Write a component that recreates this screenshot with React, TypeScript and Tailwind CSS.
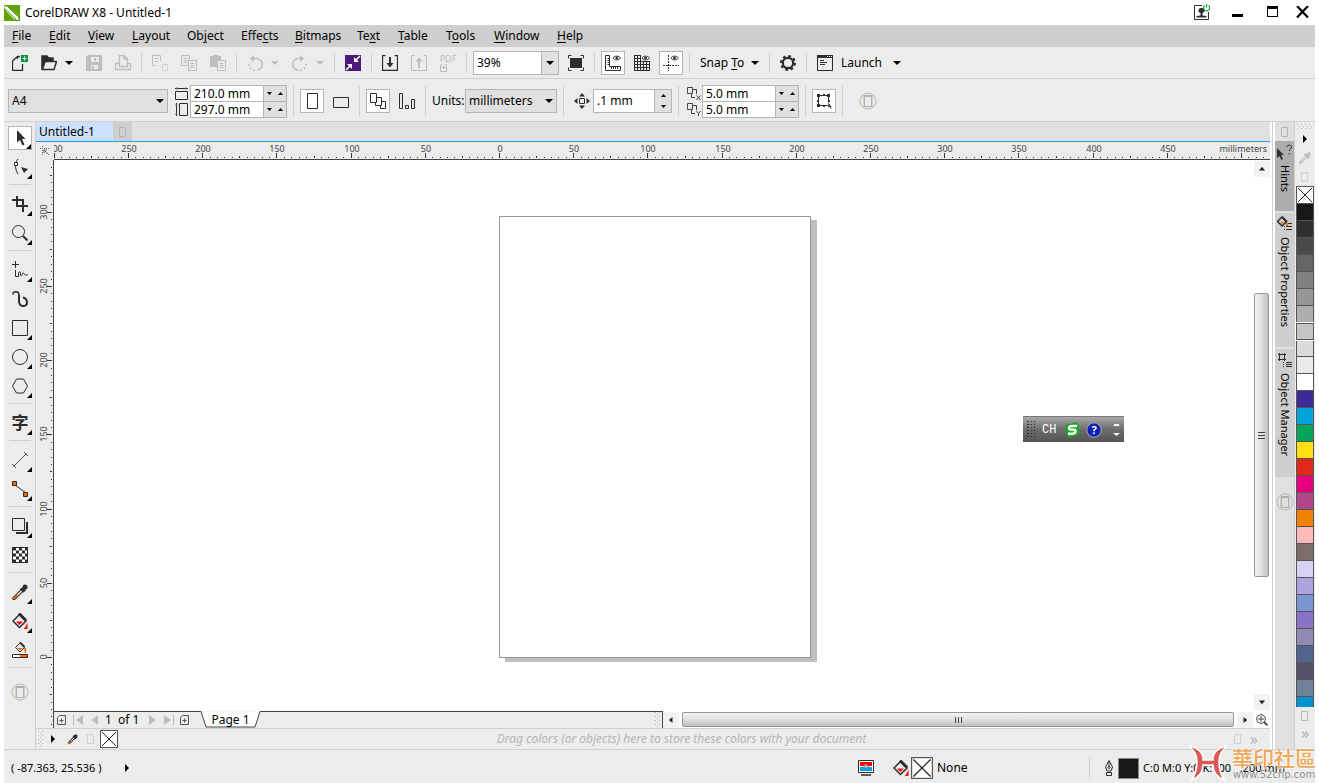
import type { ReactNode } from "react";
import clsx from "clsx";

const INK = "#2d2d2d";
const DIM = "#bdbdbd";

/* ---------- small shared parts ---------- */

function Icon({ children, size = 16, className }: { children: ReactNode; size?: number; className?: string }) {
  return (
    <svg width={size} height={size} viewBox={`0 0 ${size} ${size}`} fill="none" stroke={INK} className={clsx("shrink-0", className)} aria-hidden="true">
      {children}
    </svg>
  );
}

function Caret({ dir = "down", color = "#000" }: { dir?: "down" | "up" | "left" | "right"; color?: string }) {
  const paths = { down: "M0 2h8L4 6z", up: "M0 6h8L4 2z", left: "M6 0v8L2 4z", right: "M2 0v8l4-4z" };
  return (
    <svg width="8" height="8" viewBox="0 0 8 8" fill={color} className="shrink-0" aria-hidden="true">
      <path d={paths[dir]} />
    </svg>
  );
}

function SmallCaret({ up }: { up?: boolean }) {
  return (
    <svg width="5" height="3" viewBox="0 0 5 3" fill="#000" aria-hidden="true">
      <path d={up ? "M0 3h5L2.500 0z" : "M0 0h5L2.500 3z"} />
    </svg>
  );
}

function Separator() {
  return (
    <span className="flex w-[3px] shrink-0 justify-center self-stretch py-[5px]">
      <span className="w-px bg-[#cfcfcf]" />
    </span>
  );
}

function ToolButton({ label, active, children }: { label: string; active?: boolean; children: ReactNode }) {
  return (
    <button
      type="button"
      aria-label={label}
      title={label}
      className={clsx("flex size-6 shrink-0 items-center justify-center", active && "border border-[#b5b5b5] bg-white")}
    >
      {children}
    </button>
  );
}

function CaretButton({ label, dim }: { label: string; dim?: boolean }) {
  return (
    <button type="button" aria-label={label} className="-ml-[5px] flex h-6 w-4 shrink-0 items-center justify-center">
      <Caret color={dim ? DIM : "#000"} />
    </button>
  );
}

function PlusCircle() {
  return (
    <Icon size={18}>
      <circle cx="9" cy="9" r="8" stroke="#b8b8b8" />
      <path d="M5.500 4h7v10.500h-7z" stroke="#b0b0b0" />
      <path d="M5 4h8" stroke="#b0b0b0" strokeWidth="2" />
      <path d="M4.500 3v12" stroke="#dccfc0" />
      <path d="M13.500 3v12" stroke="#c3d0dc" />
    </Icon>
  );
}

function EmptyBox({ dim }: { dim?: boolean }) {
  return (
    <svg width="8" height="10" viewBox="0 0 8 10" fill="none" aria-hidden="true">
      <path d="M.5.5h6v9h-6z" stroke={dim ? "#cfcfcf" : "#b4b4b4"} />
    </svg>
  );
}

function NoneSwatch({ size = 17 }: { size?: number }) {
  return (
    <svg width={size} height={size} viewBox="0 0 18 18" className="shrink-0" aria-hidden="true">
      <rect x=".5" y=".5" width="17" height="17" fill="#fff" stroke="#555" />
      <path d="M2 2l14 14M16 2L2 16" stroke="#222" />
    </svg>
  );
}

function Eyedropper({ dim }: { dim?: boolean }) {
  const c = dim ? DIM : INK;
  return (
    <Icon>
      <path d="M2 14.500L10 6.500" stroke={c} strokeWidth="3.500" strokeLinecap="round" />
      <path d="M5 11.500L10 6.500" stroke="#ececec" strokeWidth="1.500" />
      {!dim && <path d="M1.500 15l4-4" stroke="#e06a1c" strokeWidth="2" />}
      <path d="M8.500 4.500l3.500 3.500" stroke={c} strokeWidth="2" />
      <circle cx="13" cy="3" r="2.500" fill={c} stroke="none" />
      <path d="M10 4l3 3" stroke={c} strokeWidth="3" />
    </Icon>
  );
}

function PaintBucket() {
  return (
    <Icon>
      <path d="M7.500 1.500L14 8l-6.500 6.500L1 8z" fill="#ececec" strokeWidth="1.500" />
      <path d="M7 .5l7 7" strokeWidth="3" />
      <path d="M4 8.500h7L7.500 12z" fill="#f00" stroke="none" />
      <path d="M15.500 9v7h-4c2-1.500 3-4 4-7z" fill="#f00" stroke="none" />
    </Icon>
  );
}

function Grip({ className }: { className?: string }) {
  return (
    <svg width="6" height="16" viewBox="0 0 6 16" fill="#b4b4b4" className={clsx("shrink-0", className)} aria-hidden="true">
      {[0, 4, 8, 12].map((y) => (
        <g key={y}>
          <path d={`M0 ${y}h1v1h-1zM4 ${y}h1v1h-1zM2 ${y + 2}h1v1h-1z`} />
        </g>
      ))}
    </svg>
  );
}

/* ---------- title and menus ---------- */

function TitleBar() {
  return (
    <header className="flex h-[25px] shrink-0 items-center">
      <svg width="16" height="16" viewBox="0 0 16 16" aria-hidden="true">
        <path d="M0 0h16v16H0z" fill="#5fa304" />
        <path d="M0 1l4 1 9 8 2 5-5-1-8-8z" fill="#fff" />
        <path d="M1 4l11 10M4 2l9 9" stroke="#5fa304" />
      </svg>
      <h1 className="ml-[5px] grow text-xs">CorelDRAW X8 - Untitled-1</h1>
      <div className="flex items-center pr-[6px] pb-[2px]">
        <button type="button" aria-label="Account" className="mr-[22px]">
          <Icon>
            <path d="M8 1.500H.5v14h14V8" />
            <path d="M7.500 4a2.500 2.500 0 0 1 1 5v2.500l4 .5v1.500H2.500V12l4-.5V9a2.500 2.500 0 0 1 1-5z" fill={INK} stroke="none" />
            <path d="M10.800 1.500a3 3 0 1 0 3.700 0M12.600 0v3.500" stroke="#19a34a" strokeWidth="1.200" />
          </Icon>
        </button>
        <button type="button" aria-label="Minimize" className="mr-6 flex h-4 w-[11px] items-end pb-[3px]">
          <span className="h-[3px] w-full bg-black" />
        </button>
        <button type="button" aria-label="Maximize" className="mr-[18px] h-[11px] w-[11px] border border-t-[3px] border-black" />
        <button type="button" aria-label="Close">
          <svg width="13" height="12" viewBox="0 0 13 12" aria-hidden="true">
            <path d="M1 0l11 11.500M12 0L1 11.500" stroke="#000" strokeWidth="2.200" />
          </svg>
        </button>
      </div>
    </header>
  );
}

// [before, hot key, after, width of the entry]
const menus: [string, string, string, string][] = [
  ["", "F", "ile", "w-[37px]"],
  ["", "E", "dit", "w-[39px]"],
  ["", "V", "iew", "w-[44px]"],
  ["", "L", "ayout", "w-[55px]"],
  ["Ob", "j", "ect", "w-[54px]"],
  ["Effe", "c", "ts", "w-[54px]"],
  ["", "B", "itmaps", "w-[62px]"],
  ["Te", "x", "t", "w-[41px]"],
  ["", "T", "able", "w-[48px]"],
  ["T", "o", "ols", "w-[48px]"],
  ["", "W", "indow", "w-[63px]"],
  ["", "H", "elp", "w-[44px]"],
];

function MenuBar() {
  return (
    <nav className="flex h-[22px] shrink-0 items-center bg-[#cfcfcf] pl-2">
      {menus.map(([before, key, after, width]) => (
        <button key={before + key + after} type="button" className={clsx("shrink-0 text-left text-xs whitespace-nowrap", width)}>
          {before}
          <u className="underline-offset-2">{key}</u>
          {after}
        </button>
      ))}
    </nav>
  );
}

/* ---------- standard toolbar ---------- */

function StandardBar() {
  return (
    <div className="flex h-8 shrink-0 items-center gap-[5px] border-b border-[#cfcfcf] pt-px pl-1">
      <ToolButton label="New">
        <Icon>
          <path d="M8 1.500H5.500L.5 6v9.500h10V9M5.500 1.500V4" strokeWidth="1.300" />
          <path d="M9 0h7v7H9z" fill="#0b9437" stroke="none" />
          <path d="M12.500 1.500v4M10.500 3.500h4" stroke="#fff" />
        </Icon>
      </ToolButton>
      <ToolButton label="Open">
        <Icon>
          <path d="M1 15V1h5l1.500 2H12v3" fill={INK} strokeWidth="1.500" />
          <path d="M1.500 14.500L4 6.500h11.500l-2.500 8z" fill="#ececec" strokeWidth="1.500" />
        </Icon>
      </ToolButton>
      <CaretButton label="Open recent" />
      <ToolButton label="Save">
        <Icon>
          <path d="M2 0h14v16H0V2z" fill={DIM} stroke="none" />
          <path d="M5 2h8v5H5zM5 10h7v4H5z" fill="#ececec" stroke="none" />
          <path d="M9 3v3M7 11v3" stroke={DIM} strokeWidth="2" />
        </Icon>
      </ToolButton>
      <ToolButton label="Print">
        <Icon>
          <path d="M4.500 11.500V.5H9l3.500 3.500v7.500zM9 .5V4h3.500M4 8.500H.5v6h15v-6H13" stroke={DIM} strokeWidth="1.300" />
        </Icon>
      </ToolButton>
      <Separator />
      <ToolButton label="Cut">
        <Icon>
          <path d="M4 10.500H.5V.5h8V6M3 3.500h3M3 6.500h3" stroke={DIM} />
          <path d="M10.500 9.500h5v6h-5z" stroke={DIM} strokeDasharray="1 1" />
        </Icon>
      </ToolButton>
      <ToolButton label="Copy">
        <Icon>
          <path d="M7 10.500H.5V.5h8V5M2.500 3.500h4M2.500 5.500h4M2.500 7.500h4" stroke={DIM} />
          <path d="M7.500 5.500h8v10h-8zM9.500 8.500h4M9.500 10.500h4M9.500 12.500h4" stroke={DIM} />
        </Icon>
      </ToolButton>
      <ToolButton label="Paste">
        <Icon>
          <path d="M0 1h3V0h5v1h3v4H7v7H0z" fill={DIM} stroke="none" />
          <path d="M7.500 5.500h8v10h-8zM9.500 8.500h4M9.500 10.500h4M9.500 12.500h4" stroke={DIM} fill="#ececec" />
        </Icon>
      </ToolButton>
      <Separator />
      <ToolButton label="Undo">
        <Icon>
          <path d="M6 3.500h3a5.700 5.700 0 0 1 1 11.500" stroke={DIM} strokeWidth="1.500" />
          <path d="M8 15.500C4 15 2 12 1.500 8.500" stroke={DIM} strokeWidth="1.500" strokeDasharray="2 2" />
          <path d="M7 0v7L3 3.500z" fill={DIM} stroke="none" />
        </Icon>
      </ToolButton>
      <CaretButton label="Undo list" dim />
      <ToolButton label="Redo">
        <Icon>
          <path d="M10 3.500H7A5.700 5.700 0 0 0 6 15" stroke={DIM} strokeWidth="1.500" />
          <path d="M8 15.500c4-.5 6-3.500 6.500-7" stroke={DIM} strokeWidth="1.500" strokeDasharray="2 2" />
          <path d="M8 0v7l4-3.500z" fill={DIM} stroke="none" />
        </Icon>
      </ToolButton>
      <CaretButton label="Redo list" dim />
      <Separator />
      <ToolButton label="Search content">
        <Icon>
          <path d="M0 0h16v16H0z" fill="#4d1979" stroke="none" />
          <path d="M15 1l-5 5M1 15l5-5" stroke="#fff" strokeWidth="1.500" />
          <path d="M9 2v5h5zM2 9h5v5z" fill="#fff" stroke="none" />
        </Icon>
      </ToolButton>
      <Separator />
      <ToolButton label="Import">
        <Icon>
          <path d="M3.500.5h-3v15h15V.5h-3" strokeWidth="1.300" />
          <path d="M8 2v8" strokeWidth="2" />
          <path d="M4.500 8h7L8 12.500z" fill={INK} stroke="none" />
        </Icon>
      </ToolButton>
      <ToolButton label="Export">
        <Icon>
          <path d="M3.500.5h-3v15h15V.5h-3" stroke={DIM} />
          <path d="M8 5v8" stroke={DIM} strokeWidth="2" />
          <path d="M4.500 6.500h7L8 2z" fill={DIM} stroke="none" />
        </Icon>
      </ToolButton>
      <ToolButton label="Publish to PDF">
        <span className="flex flex-col items-start gap-px text-[#bdbdbd]">
          <span className="text-[9px] leading-[8px]">PDF</span>
          <svg width="8" height="8" viewBox="0 0 8 8" fill="none" stroke={DIM} aria-hidden="true">
            <path d="M2 .5H.5v7h6V.5H5M3.500 1v4M1.500 3.500h4" />
          </svg>
        </span>
      </ToolButton>
      <Separator />
      <div className="flex h-6 w-[86px] shrink-0 border border-[#b5b5b5] bg-white">
        <input aria-label="Zoom level" defaultValue="39%" className="w-[67px] px-[3px] text-xs outline-none" />
        <button type="button" aria-label="Zoom levels" className="flex grow items-center justify-center border-l border-[#b5b5b5] bg-[#e0e0e0]">
          <Caret />
        </button>
      </div>
      <ToolButton label="Full-screen preview">
        <Icon>
          <path d="M2 3h12v10H2z" fill={INK} stroke="none" />
          <path d="M3.500.5h-3v3M12.500.5h3v3M3.500 15.500h-3v-3M12.500 15.500h3v-3" />
        </Icon>
      </ToolButton>
      <Separator />
      <ToolButton label="Show rulers" active>
        <Icon>
          <path d="M.5.5h4v11h11v4H.5zM2.500 3.500h2M2.500 5.500h2M2.500 7.500h2M2.500 9.500h2M6.500 14v-2M8.500 14v-2M10.500 14v-2M12.500 14v-2" />
          <path d="M8 3C9.500.5 14 .5 15.500 3c-1.500 2.500-6 2.500-7.500 0z" />
          <circle cx="11.800" cy="3" r="1" fill={INK} />
        </Icon>
      </ToolButton>
      <ToolButton label="Show grid">
        <Icon>
          <path d="M.5.500v15M3.500.500v15M6.500.500v15M9.500 6v10M12.500 6v10M15.500 6v10M0 .5h7M0 3.500h7M0 6.500h16M0 9.500h16M0 12.500h16M0 15.500h16" />
          <path d="M8 3C9.500.5 13.500.5 15.500 3c-2 2.500-6 2.500-7.500 0z" />
          <circle cx="11.500" cy="3" r="1" fill={INK} />
        </Icon>
      </ToolButton>
      <ToolButton label="Show guidelines" active>
        <Icon>
          <path d="M5.500 0v16" strokeDasharray="2 1" />
          <path d="M0 10.500h16" strokeDasharray="2 1" />
          <path d="M8 3C9.500.5 13.500.5 15.500 3c-2 2.500-6 2.500-7.500 0z" />
          <circle cx="11.500" cy="3" r="1" fill={INK} />
        </Icon>
      </ToolButton>
      <Separator />
      <button type="button" className="flex h-6 w-[67px] shrink-0 items-center justify-between pr-1 pl-1 text-xs whitespace-nowrap">
        <span>
          Snap <u className="underline-offset-2">T</u>o
        </span>
        <Caret />
      </button>
      <Separator />
      <ToolButton label="Options">
        <Icon>
          <circle cx="8" cy="8" r="5.200" strokeWidth="2.200" />
          <circle cx="8" cy="8" r="7" strokeWidth="2" strokeDasharray="2.750 2.750" />
        </Icon>
      </ToolButton>
      <Separator />
      <button type="button" className="flex h-6 w-[88px] shrink-0 items-center pl-1 text-xs">
        <Icon>
          <path d="M.5.5h15v15H.5zM3 5.500h4M3 7.500h7M3 9.500h5" />
          <path d="M0 1.500h16" strokeWidth="3" />
          <path d="M10 1.500h5" stroke="#fff" strokeDasharray="1 1" />
        </Icon>
        <span className="ml-2 grow text-left">Launch</span>
        <Caret />
      </button>
    </div>
  );
}

/* ---------- property bar ---------- */

function StackedFields({ rows }: { rows: { label: string; value: string; icon: ReactNode }[] }) {
  return (
    <div className="flex shrink-0 flex-col">
      {rows.map((row, i) => (
        <label key={row.label} className="flex items-center">
          <span className="flex w-[17px] items-center justify-center">{row.icon}</span>
          <span className={clsx("flex h-[17px] w-[97px] border border-[#b5b5b5] bg-white", i > 0 && "-mt-px")}>
            <input aria-label={row.label} defaultValue={row.value} className="w-[72px] pl-[3px] text-xs leading-[15px] outline-none" />
            <span className="flex grow items-center justify-around border-l border-[#b5b5b5] bg-[#e0e0e0]">
              <SmallCaret />
              <SmallCaret up />
            </span>
          </span>
        </label>
      ))}
    </div>
  );
}

function Select({ label, id, options, width }: { label?: string; id: string; options: string[]; width: string }) {
  return (
    <span className={clsx("grid h-6 shrink-0 items-center border border-[#b5b5b5] bg-[#e0e0e0]", width)}>
      <select id={id} aria-label={label} className="col-start-1 row-start-1 h-full w-full appearance-none pl-[3px] text-xs outline-none">
        {options.map((o) => (
          <option key={o}>{o}</option>
        ))}
      </select>
      <span className="pointer-events-none col-start-1 row-start-1 mr-[3px] justify-self-end">
        <Caret />
      </span>
    </span>
  );
}

function DuplicateIcon({ axis }: { axis: "X" | "Y" }) {
  return (
    <svg width="14" height="13" viewBox="0 0 14 13" fill="none" stroke="#444" aria-hidden="true">
      <path d="M.5.5h5v6h-5zM6 2.500h3.500V7M4.500 7v3.500H8" />
      <path d={axis === "X" ? "M9.500 8.500l4 4.500M13.500 8.500l-4 4.500" : "M9.500 8l2 2.500 2-2.500M11.500 10.500V13"} />
    </svg>
  );
}

function PropertyBar() {
  return (
    <div className="flex h-[43px] shrink-0 items-center gap-[5px] border-b border-[#cfcfcf] pt-[2px] pl-1">
      <Select id="page-size" label="Page size" options={["A4", "A3", "Letter"]} width="w-[160px]" />
      <StackedFields
        rows={[
          {
            label: "Page width",
            value: "210.0 mm",
            icon: (
              <svg width="13" height="13" viewBox="0 0 13 13" fill="none" stroke={INK} aria-hidden="true">
                <path d="M0 1.500h13M.5 4.500h12v8H.5z" />
                <path d="M2 0v3M11 0v3" stroke="#888" />
              </svg>
            ),
          },
          {
            label: "Page height",
            value: "297.0 mm",
            icon: (
              <svg width="13" height="13" viewBox="0 0 13 13" fill="none" stroke={INK} aria-hidden="true">
                <path d="M1.500 0v13M4.500.5h8v12h-8z" />
                <path d="M0 2h3M0 11h3" stroke="#888" />
              </svg>
            ),
          },
        ]}
      />
      <Separator />
      <ToolButton label="Portrait" active>
        <Icon>
          <path d="M3.500.5h10v15h-10z" />
        </Icon>
      </ToolButton>
      <ToolButton label="Landscape">
        <Icon>
          <path d="M.5 4.500h15v10H.5z" />
        </Icon>
      </ToolButton>
      <Separator />
      <ToolButton label="All pages" active>
        <Icon>
          <path d="M10.500 8.500h5v7h-5z" fill="#fff" />
          <path d="M5.500 4.500h6v8h-6z" fill="#fff" />
          <path d="M.5.5h6v9h-6z" fill="#fff" />
        </Icon>
      </ToolButton>
      <ToolButton label="Current page">
        <Icon>
          <path d="M.5.5h3v15h-3zM6.500 12.500h3v3h-3zM12.500 6.500h3v9h-3z" />
        </Icon>
      </ToolButton>
      <Separator />
      <div className="flex w-[125px] shrink-0 items-center justify-between">
        <label htmlFor="units" className="text-xs">
          Units:
        </label>
        <Select id="units" options={["millimeters", "inches", "pixels"]} width="w-[92px]" />
      </div>
      <Separator />
      <label className="flex shrink-0 items-center">
        <span className="flex w-[23px] justify-center">
          <Icon>
            <path d="M5.500 5.500h5v5h-5z" />
            <path d="M8 0l3 3.500H5zM8 16l3-3.500H5zM0 8l3.500-3v6zM16 8l-3.500-3v6z" fill={INK} stroke="none" />
          </Icon>
        </span>
        <span className="flex h-6 w-[79px] border border-[#b5b5b5] bg-white">
          <input aria-label="Nudge distance" defaultValue=".1 mm" className="w-[60px] pl-[3px] text-xs outline-none" />
          <span className="flex grow flex-col items-center justify-around border-l border-[#b5b5b5] bg-[#e0e0e0]">
            <SmallCaret up />
            <SmallCaret />
          </span>
        </span>
      </label>
      <Separator />
      <StackedFields
        rows={[
          { label: "Duplicate distance X", value: "5.0 mm", icon: <DuplicateIcon axis="X" /> },
          { label: "Duplicate distance Y", value: "5.0 mm", icon: <DuplicateIcon axis="Y" /> },
        ]}
      />
      <Separator />
      <ToolButton label="Treat as filled" active>
        <Icon>
          <path d="M2.500 2.500h10v10h-10z" />
          <path d="M1 1h3v3H1zM11 1h3v3h-3zM1 11h3v3H1zM7 1h2v2H7zM7 12h2v2H7zM1 7h2v2H1zM12 7h2v2h-2z" fill={INK} stroke="none" />
          <path d="M12 9v6l1.500-1 1 2h1.500l-1-2h1z" fill={INK} stroke="#fff" strokeWidth=".5" />
        </Icon>
      </ToolButton>
      <Separator />
      <button type="button" aria-label="Customize property bar" className="ml-[10px]">
        <PlusCircle />
      </button>
    </div>
  );
}

/* ---------- toolbox ---------- */

type Tool = { name: string; flyout?: boolean; active?: boolean; icon: ReactNode };

const toolGroups: Tool[][] = [
  [
    { name: "Pick", flyout: true, active: true, icon: <path d="M5 0v12.500l3-2.500 2.500 5.500 2-1-2.500-5.500h3.500z" fill={INK} stroke="none" /> },
    {
      name: "Shape",
      flyout: true,
      icon: (
        <>
          <path d="M6 0C3 3 2.500 10 6 15" />
          <path d="M2.500 3.500h3v3h-3z" fill="#fff" />
          <path d="M9 8l7 2-4 4z" fill={INK} stroke="none" />
        </>
      ),
    },
  ],
  [
    {
      name: "Crop",
      flyout: true,
      icon: <path d="M5 0v10h11M0 4h11v12" strokeWidth="2" />,
    },
    {
      name: "Zoom",
      flyout: true,
      icon: (
        <>
          <circle cx="6.500" cy="6.500" r="6" />
          <path d="M11 11l4.500 4.500" strokeWidth="2" />
        </>
      ),
    },
  ],
  [
    {
      name: "Freehand",
      flyout: true,
      icon: <path d="M3.500-1v7M0 2.500h7M3.500 8v6.500h3v-4c1-1 2-1 2 1v2c1 1 1.500 0 2-2s2 1 2.500 1.500 1.500 0 3-.5" />,
    },
    {
      name: "Artistic media",
      icon: (
        <>
          <path d="M.7 3.500C1.500-.5 7 0 7 4v6" strokeWidth="1.500" />
          <path d="M7 4v6c0 6.500 8 6.500 8 1.500 0-2.500-1.500-4.500-4-5" strokeWidth="2" />
        </>
      ),
    },
    { name: "Rectangle", flyout: true, icon: <path d="M.5.5h15v15H.5z" /> },
    { name: "Ellipse", flyout: true, icon: <circle cx="8" cy="8" r="7.500" /> },
    { name: "Polygon", flyout: true, icon: <path d="M4.500 1h7L15.500 8l-4 7h-7L.5 8z" /> },
  ],
  [
    {
      name: "Text",
      flyout: true,
      icon: (
        <text x="8" y="14" textAnchor="middle" fill={INK} stroke="none" fontSize="17" fontWeight="700" fontFamily='"Noto Sans CJK SC", sans-serif'>
          字
        </text>
      ),
    },
  ],
  [
    {
      name: "Parallel dimension",
      flyout: true,
      icon: <path d="M1.500 14.500l13-13M0 12l4 4M12 0l4 4" stroke="#555" />,
    },
    {
      name: "Straight-line connector",
      flyout: true,
      icon: (
        <>
          <path d="M3 4l11 8" />
          <path d="M.5.5h4v4h-4zM11.500 11.500h4v4h-4z" fill="#ff6a00" />
        </>
      ),
    },
  ],
  [
    {
      name: "Drop shadow",
      flyout: true,
      icon: (
        <>
          <path d="M15 4v11H4" strokeWidth="2" />
          <path d="M.5.5h12v12H.5z" />
        </>
      ),
    },
    {
      name: "Transparency",
      icon: (
        <>
          <path d="M.5.5h15v15H.5z" fill="#fff" />
          {[0, 1, 2, 3, 4].map((r) => (
            <path key={r} d={`M${r % 2 ? 4 : 1} ${2 + r * 3}H15`} strokeWidth="3" strokeDasharray="3 3" />
          ))}
          <path d="M.5.5h15v15H.5z" />
        </>
      ),
    },
  ],
  [
    { name: "Color eyedropper", flyout: true, icon: <Eyedropper /> },
    { name: "Interactive fill", flyout: true, icon: <PaintBucket /> },
    {
      name: "Smart fill",
      icon: (
        <>
          <path d="M8 1l4.500 4.500L8 10 3.500 5.500z" />
          <path d="M8 .5l4.500 4.500" strokeWidth="2" />
          <path d="M5.500 6h5L8 8.500zM12 6h2v5h-1z" fill="#f60" stroke="none" />
          <path d="M.5 12.500h15v3H.5z" fill="#fff" />
          <path d="M8 13h7v2H8z" fill="#f60" stroke="none" />
        </>
      ),
    },
  ],
];

function Toolbox() {
  return (
    <aside className="flex w-8 shrink-0 flex-col items-center gap-[5px] border-r border-[#cfcfcf] pt-1">
      {toolGroups.map((group) => (
        <div key={group[0].name} className="flex flex-col items-center gap-[5px]">
          {group.map((tool) => (
            <button
              key={tool.name}
              type="button"
              aria-label={tool.name}
              title={tool.name}
              className={clsx("relative flex size-6 items-center justify-center", tool.active && "border border-[#b5b5b5] bg-white")}
            >
              <Icon className="overflow-visible">{tool.icon}</Icon>
              {tool.flyout && (
                <svg width="5" height="5" viewBox="0 0 5 5" className="absolute right-0 bottom-0" aria-hidden="true">
                  <path d="M5 0v5H0z" />
                </svg>
              )}
            </button>
          ))}
          <span className="mb-[2px] h-px w-[22px] bg-[#cfcfcf]" />
        </div>
      ))}
      <button type="button" aria-label="Customize toolbox" className="mt-2">
        <PlusCircle />
      </button>
    </aside>
  );
}

/* ---------- rulers ---------- */

const PX_PER_5MM = 7.42;

// step is counted in units of 5 mm from the page origin
function ticks(from: number, to: number) {
  return Array.from({ length: to - from + 1 }, (_, i) => {
    const step = from + i;
    return { step, offset: Math.round(step * PX_PER_5MM), size: step % 10 === 0 ? 5 : step % 5 === 0 ? 2 : 1 };
  });
}

function HorizontalRuler() {
  return (
    <div className="flex h-[18px] min-w-0 grow border-b border-[#444]">
      <svg className="h-[17px] min-w-0 grow text-[9px]" fill="#444" aria-hidden="true">
        {ticks(-60, 104).map(({ step, offset, size }) => (
          <g key={step}>
            <rect x={445 + offset} y={16 - size} width="1" height={size} fill="#333" />
            {step % 10 === 0 && step < 100 && (
              <text x={446 + offset} y="10" textAnchor="middle">
                {Math.abs(step) * 5}
              </text>
            )}
          </g>
        ))}
        <text x="1213" y="10" textAnchor="end">
          millimeters
        </text>
      </svg>
    </div>
  );
}

function VerticalRuler() {
  return (
    <svg className="h-full w-[18px] shrink-0 border-r border-[#444] text-[9px]" fill="#444" aria-hidden="true">
      {ticks(-9, 66).map(({ step, offset, size }) => {
        const y = 497 - offset;
        return (
          <g key={step}>
            <rect x={16 - size} y={y} width={size} height="1" fill="#333" />
            {step % 10 === 0 && (
              <text x="11" y={y} textAnchor="middle" transform={`rotate(-90 11 ${y})`}>
                {Math.abs(step) * 5}
              </text>
            )}
          </g>
        );
      })}
    </svg>
  );
}

/* ---------- drawing area ---------- */

function LanguageBar() {
  return (
    <div className="absolute top-[256px] left-[969px] flex h-[26px] w-[101px] items-center border-t border-[#777] bg-linear-to-b from-[#a8a8a8] via-[#6d6d6d] to-[#545454] pl-1">
      <svg width="9" height="18" fill="#2d2d2d" aria-hidden="true">
        {[0, 3, 6, 9, 12, 15].map((y) => (
          <path key={y} d={`M0 ${y}h2v1h-2zM4 ${y}h1v1h-1zM7 ${y}h1v1h-1z`} />
        ))}
      </svg>
      <span className="ml-[6px] font-['Liberation_Mono',monospace] text-xs text-white">CH</span>
      <svg width="16" height="16" viewBox="0 0 16 16" className="ml-2" aria-hidden="true">
        <path d="M1 3l12-3 3 12-12 4z" fill="#17a91f" />
        <path d="M13 4C8 3.500 4.500 4 5 6.500S11 6 11.500 9 7 12 4 11.500" fill="none" stroke="#fff" strokeWidth="2.400" />
      </svg>
      <svg width="16" height="16" viewBox="0 0 16 16" className="ml-[6px]" aria-hidden="true">
        <circle cx="8" cy="8" r="7.200" fill="#1020b8" stroke="#aab" />
        <text x="8" y="12" textAnchor="middle" fill="#fff" fontSize="11" fontWeight="700">
          ?
        </text>
      </svg>
      <svg width="7" height="14" viewBox="0 0 7 14" fill="#fff" className="ml-[11px]" aria-hidden="true">
        <path d="M1 1h5v2H1zM0 10h7L3.500 13z" />
      </svg>
    </div>
  );
}

function ScrollButton({ dir }: { dir: "up" | "down" | "left" | "right" }) {
  return (
    <button type="button" aria-label={`Scroll ${dir}`} className="flex size-4 shrink-0 items-center justify-center bg-[#f2f2f2]">
      <svg width="6" height="6" viewBox="0 0 8 8" fill="#222" aria-hidden="true">
        <path d={{ down: "M0 2h8L4 7z", up: "M0 6h8L4 1z", left: "M6 0v8L1 4z", right: "M2 0v8l5-4z" }[dir]} />
      </svg>
    </button>
  );
}

function VerticalScrollbar() {
  return (
    <div className="flex w-4 shrink-0 flex-col pt-px pb-px">
      <ScrollButton dir="up" />
      <div className="grow-[116]" />
      <div className="mr-px flex grow-[284] basis-0 items-center justify-center rounded-[2px] border border-[#969696] bg-linear-to-r from-[#f3f3f3] via-[#e0e0e0] to-[#bebebe]">
        <span className="flex w-[7px] flex-col gap-[2px]">
          <span className="h-px bg-[#444]" />
          <span className="h-px bg-[#444]" />
          <span className="h-px bg-[#444]" />
        </span>
      </div>
      <div className="grow-[117]" />
      <ScrollButton dir="down" />
    </div>
  );
}

function AddPageIcon() {
  return (
    <svg width="9" height="10" viewBox="0 0 9 10" fill="none" stroke="#555" aria-hidden="true">
      <path d="M2.500.5h6v9h-8v-7zM2.500 5.500h4M4.500 3.500v4" />
    </svg>
  );
}

function PageArrow({ dir, bar }: { dir: "left" | "right"; bar?: boolean }) {
  return (
    <svg width="11" height="10" viewBox="0 0 11 10" fill={DIM} className="shrink-0" aria-hidden="true">
      {dir === "left" ? <path d="M10 0v10L3 5z" /> : <path d="M1 0v10l7-5z" />}
      {bar && <path d={dir === "left" ? "M0 0h1v10H0z" : "M10 0h1v10h-1z"} />}
    </svg>
  );
}

function PageNavigator() {
  return (
    <div className="flex w-[609px] shrink-0 items-center border-r border-[#444]">
      <div className="flex h-full w-[146px] shrink-0 items-center border-t border-[#444] pl-[3px]">
        <button type="button" aria-label="Add page before">
          <AddPageIcon />
        </button>
        <button type="button" aria-label="First page" className="ml-[7px]">
          <PageArrow dir="left" bar />
        </button>
        <button type="button" aria-label="Previous page" className="ml-1">
          <PageArrow dir="left" />
        </button>
        <span className="mx-[6px] text-xs whitespace-pre">1  of 1</span>
        <button type="button" aria-label="Next page" className="ml-[3px]">
          <PageArrow dir="right" />
        </button>
        <button type="button" aria-label="Last page" className="ml-1">
          <PageArrow dir="right" bar />
        </button>
        <button type="button" aria-label="Add page after" className="ml-[6px]">
          <AddPageIcon />
        </button>
      </div>
      <button type="button" className="grid h-full w-[61px] shrink-0 items-center justify-items-center text-xs">
        <svg width="61" height="17" viewBox="0 0 61 17" className="col-start-1 row-start-1" aria-hidden="true">
          <path d="M0 .5h1l5 15.500h49l5-15.500h1" fill="#fff" stroke="#444" />
        </svg>
        <span className="col-start-1 row-start-1">Page 1</span>
      </button>
      <div className="flex h-full grow items-center justify-end border-t border-[#444] pr-px">
        <Grip />
      </div>
    </div>
  );
}

function BottomBar() {
  return (
    <div className="flex h-[17px] shrink-0 bg-[#ececec]">
      <PageNavigator />
      <div className="flex min-w-0 grow items-center bg-white">
        <ScrollButton dir="left" />
        <div className="mx-[3px] flex h-[15px] grow items-center justify-center gap-[2px] rounded-[2px] border border-[#969696] bg-linear-to-b from-[#f3f3f3] via-[#e0e0e0] to-[#bebebe]">
          <span className="h-[6px] w-px bg-[#444]" />
          <span className="h-[6px] w-px bg-[#444]" />
          <span className="h-[6px] w-px bg-[#444]" />
        </div>
        <ScrollButton dir="right" />
        <button type="button" aria-label="Navigator" className="flex w-[17px] justify-center">
          <svg width="12" height="12" viewBox="0 0 12 12" fill="none" stroke="#444" aria-hidden="true">
            <circle cx="5" cy="5" r="4.300" />
            <path d="M8 8l3.500 3.500" strokeWidth="1.800" />
            <path d="M5 2v6M2 5h6" />
          </svg>
        </button>
      </div>
    </div>
  );
}

function DocumentPalette() {
  return (
    <div className="flex h-[21px] shrink-0 items-center border-t border-[#cfcfcf] pl-[2px]">
      <Grip />
      <button type="button" aria-label="Palette menu" className="ml-[5px]">
        <Caret dir="right" />
      </button>
      <button type="button" aria-label="Pick palette color" className="ml-[10px]">
        <Icon size={12}>
          <path d="M1.500 10.500l7-7" strokeWidth="2.500" />
          <path d="M1.500 10.500L4 8" stroke="#e06a1c" strokeWidth="1.500" />
          <path d="M4 8l3-3" stroke="#eee" />
          <path d="M6.500 2.500l3 3M10 2l-2 2" strokeWidth="2.500" />
        </Icon>
      </button>
      <span className="ml-2">
        <EmptyBox dim />
      </span>
      <button type="button" aria-label="No color" className="ml-[5px]">
        <NoneSwatch size={18} />
      </button>
      <p className="grow pr-[5px] pl-4 text-center text-xs text-[#b4b4b4] italic">Drag colors (or objects) here to store these colors with your document</p>
      <EmptyBox dim />
      <button type="button" aria-label="Expand palette" className="mr-3 ml-2 text-base leading-4 text-[#b0b0b0]">
        »
      </button>
    </div>
  );
}

function Workspace() {
  return (
    <main className="flex min-w-0 grow flex-col">
      <div className="flex h-5 shrink-0 border-b border-[#18a0e0] bg-[#e0e0e0]">
        <button type="button" className="w-[77px] bg-[#cce1ff] pl-[3px] text-left text-xs">
          Untitled-1
        </button>
        <button type="button" aria-label="New document" className="flex w-[19px] items-center justify-center bg-[#cfcfcf]">
          <EmptyBox />
        </button>
      </div>
      <div className="flex shrink-0">
        <div className="flex w-[18px] shrink-0 items-center justify-center">
          <svg width="10" height="10" viewBox="0 0 10 10" fill="none" stroke="#666" aria-hidden="true">
            <path d="M2.500 0v10M0 2.500h10" strokeDasharray="1 1" />
            <path d="M4 4l5 5M4 7V4h3" />
          </svg>
        </div>
        <HorizontalRuler />
      </div>
      <div className="flex min-h-0 grow">
        <VerticalRuler />
        <div className="flex min-w-0 grow flex-col">
          <div className="relative flex min-h-0 grow justify-end overflow-hidden bg-white">
            <div className="absolute top-14 left-[445px] h-[442px] w-[312px] border border-[#999] bg-white shadow-[6px_4px_0_0_#bfbfbf]" />
            <LanguageBar />
            <VerticalScrollbar />
          </div>
          <BottomBar />
        </div>
      </div>
      <DocumentPalette />
    </main>
  );
}

/* ---------- dockers and color palette ---------- */

const dockers = [
  {
    name: "Hints",
    style: "h-[70px] bg-[#adadad]",
    icon: (
      <>
        <path d="M0 4v10l2.500-2 2 4 1.500-1-2-4h3z" fill={INK} stroke="none" />
        <path d="M10 3c0-2.500 4.500-2.500 4.500 0 0 2-2.300 2-2.300 4M12.200 9v1.500" />
      </>
    ),
  },
  {
    name: "Object Properties",
    style: "h-[134px] bg-[#cfcfcf]",
    icon: (
      <>
        <path d="M5 1l4.500 4.500L5 10 .5 5.500z" strokeWidth="1.500" />
        <path d="M5 1l5 5" strokeWidth="2" />
        <path d="M3 6h4L5 8zM9 7h2v3H9z" fill="#f60" stroke="none" />
        <path d="M11 7.500h4M7 10.500h1M9 10.500h6M7 13.500h1M9 13.500h6" />
      </>
    ),
  },
  {
    name: "Object Manager",
    style: "h-[128px] bg-[#cfcfcf]",
    icon: (
      <>
        <path d="M2.500 1v8M7.500 1v8M1 2.500h8M1 7.500h8" />
        <path d="M6 10.500h1M9 10.500h6M6 12.500h1M9 12.500h6M6 14.500h1M9 14.500h6" />
      </>
    ),
  },
];

function Dockers() {
  return (
    <aside className="ml-[2px] flex w-5 shrink-0 flex-col items-center gap-[2px] border-r border-[#cfcfcf] bg-[#e0e0e0]">
      <div className="-mb-[2px] flex h-[19px] items-center">
        <EmptyBox />
      </div>
      {dockers.map((d) => (
        <button key={d.name} type="button" className={clsx("flex w-full shrink-0 flex-col items-center gap-[5px] pt-[3px] text-[11px]", d.style)}>
          <Icon>{d.icon}</Icon>
          <span className="whitespace-nowrap [writing-mode:vertical-rl]">{d.name}</span>
        </button>
      ))}
      <button type="button" aria-label="Quick customize" className="mt-[14px]">
        <PlusCircle />
      </button>
    </aside>
  );
}

const swatches = [
  "#161817", "#30302e", "#4a4a49", "#656563", "#808080", "#969696", "#adaeb0", "#c4c6c6", "#dadbdb", "#ebebeb",
  "#ffffff", "#3b2a98", "#00a4da", "#00a45a", "#ffe014", "#df2a1b", "#e5007f", "#b0478b", "#f08200", "#ffb9bb",
  "#7c6e66", "#d9d3f3", "#aea3df", "#7a95d2", "#8a72c6", "#928ab3", "#51658d", "#565069", "#70829a", "#0092cc",
];

function ColorPalette() {
  return (
    <aside className="flex w-5 shrink-0 flex-col items-center">
      <svg width="16" height="6" viewBox="0 0 16 6" fill="#b4b4b4" className="mt-px shrink-0" aria-hidden="true">
        {[0, 4, 8, 12].map((x) => (
          <path key={x} d={`M${x} 1h1v1h-1zM${x + 2} 3h1v1h-1zM${x} 5h1v1h-1z`} />
        ))}
      </svg>
      <button type="button" aria-label="Palette options" className="mt-[6px]">
        <Caret dir="right" />
      </button>
      <button type="button" aria-label="Eyedropper" className="mt-2">
        <Icon size={14}>
          <path d="M1.500 12.500l8-8" stroke={DIM} strokeWidth="2.500" />
          <path d="M3 11l5-5" stroke="#eee" />
          <path d="M7 3l4 4M12 2l-3 3" stroke={DIM} strokeWidth="3" />
        </Icon>
      </button>
      <span className="mt-[7px] mb-1">
        <EmptyBox dim />
      </span>
      <button type="button" aria-label="No color">
        <NoneSwatch size={18} />
      </button>
      <div className="flex min-h-0 w-5 shrink flex-col overflow-hidden px-px">
        {swatches.map((color, i) => (
          <button
            key={color}
            type="button"
            aria-label={`Color ${color}`}
            className={clsx("h-[17px] shrink-0 border border-[#555]", i === 7 ? "z-10 outline-1 outline-white" : "border-t-0")}
            style={{ backgroundColor: color }}
          />
        ))}
      </div>
      <div className="flex h-[42px] shrink-0 flex-col items-center gap-[6px] pt-1">
        <EmptyBox />
        <button type="button" aria-label="More colors" className="text-base leading-3 text-[#b0b0b0]">
          »
        </button>
      </div>
    </aside>
  );
}

/* ---------- status bar ---------- */

function StatusBar() {
  return (
    <footer className="flex h-[34px] shrink-0 items-center border-t border-[#cfcfcf] pt-[3px] pl-[7px] text-xs whitespace-nowrap">
      <span className="w-[112px] shrink-0 text-[11px]">( -87.363, 25.536 )</span>
      <button type="button" aria-label="Status options" className="grow">
        <Caret dir="right" />
      </button>
      <Icon>
        <path d="M.5.5h15v12H.5z" fill="#fff" />
        <path d="M2 2h12v4H2z" fill="#f00" stroke="none" />
        <path d="M2 7h12v4H2z" fill="#00a2ed" stroke="none" />
        <circle cx="8" cy="6.500" r="2" fill="#bbb" stroke="#888" />
        <path d="M3 15h10" strokeWidth="1.500" />
      </Icon>
      <span className="ml-[19px] flex w-[196px] shrink-0 items-center">
        <PaintBucket />
        <span className="ml-[2px]">
          <NoneSwatch size={22} />
        </span>
        <span className="ml-1">None</span>
      </span>
      <span className="h-[22px] w-px bg-[#cfcfcf]" />
      <span className="flex w-[225px] shrink-0 items-center pl-[14px]">
        <svg width="10" height="16" viewBox="0 0 10 16" fill="none" stroke={INK} aria-hidden="true">
          <path d="M5 .5L1.500 7l1.500 4h4l1.500-4zM5 1v6M2.500 12.500h5v3h-5z" />
          <circle cx="5" cy="7.500" r="1" />
        </svg>
        <span className="ml-1 size-[21px] border border-[#888] bg-[#161817]" />
        <span className="ml-1 text-[11px] whitespace-pre">C:0 M:0 Y:0 K:100   .200 mm</span>
      </span>
    </footer>
  );
}

function Watermark() {
  return (
    <div className="pointer-events-none absolute right-[3px] bottom-px flex items-center gap-1" aria-hidden="true">
      <svg width="40" height="37" viewBox="0 0 40 37" fill="none">
        <path
          d="M1 1c10 2 15 8 14 14h10c-1-6 4-12 14-14-6 5-8 9-8 16s2 13 5 18c-7-3-11-8-11-15H15c0 7-4 12-11 15 3-5 5-11 5-18S7 6 1 1z"
          fill="#dc5757"
          stroke="#fff"
          strokeWidth="1.500"
        />
      </svg>
      <div className="flex flex-col items-center">
        <span className="font-['Noto_Sans_CJK_TC',sans-serif] text-[21px] leading-[22px] font-medium text-[#efa85a] [text-shadow:0_0_2px_#fff,0_0_2px_#fff]">
          華印社區
        </span>
        <span className="font-['DejaVu_Sans',sans-serif] text-[10px] leading-[14px] text-[#8a8a8a] [text-shadow:0_0_2px_#fff]">www.52cnp.com</span>
      </div>
    </div>
  );
}

export default function App() {
  return (
    <div className="relative flex h-screen flex-col overflow-hidden bg-white px-1 font-['Noto_Sans','Noto_Sans_CJK_SC',sans-serif] text-black">
      <TitleBar />
      <MenuBar />
      <div className="flex min-h-0 grow flex-col bg-[#ececec]">
        <StandardBar />
        <PropertyBar />
        <div className="flex min-h-0 grow">
          <Toolbox />
          <Workspace />
          <div className="flex shrink-0 bg-white">
            <span className="ml-[2px] w-px bg-[#cfcfcf]" />
            <Dockers />
          </div>
          <ColorPalette />
        </div>
        <StatusBar />
      </div>
      <Watermark />
    </div>
  );
}
